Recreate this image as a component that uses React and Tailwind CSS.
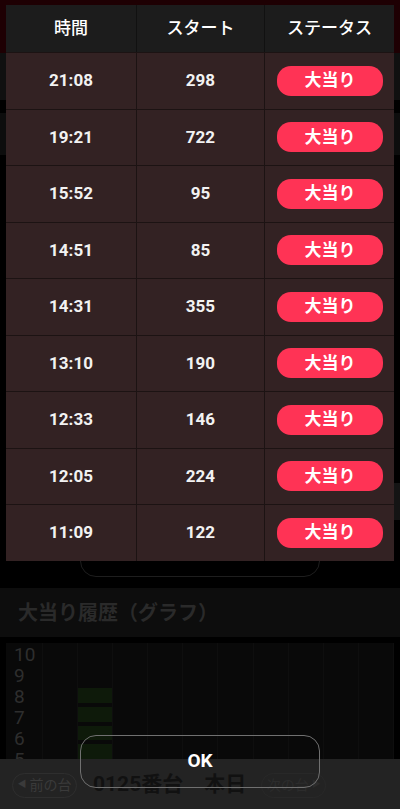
const rows = [
  ["21:08", "298"],
  ["19:21", "722"],
  ["15:52", "95"],
  ["14:51", "85"],
  ["14:31", "355"],
  ["13:10", "190"],
  ["12:33", "146"],
  ["12:05", "224"],
  ["11:09", "122"],
];

const labels = ["10", "9", "8", "7", "6", "5"];
const font = { fontFamily: '"Roboto", "Noto Sans CJK JP", sans-serif' };

const Graph = () => (
  <div className="mx-[6px] mt-[6px] h-[116px] bg-[#090909] flex">
    <div className="w-[37px] flex flex-col pl-[8px] pt-[1px] border-r border-[#0e0e0e]">
      {labels.map((l) => (
        <div key={l} className="h-[21px] leading-[21px] text-[19px] text-[#2e2e2e]">
          {l}
        </div>
      ))}
    </div>
    {Array.from({ length: 10 }).map((_, c) => (
      <div key={c} className="flex-1 border-r border-[#0e0e0e] flex flex-col pt-[45px] gap-[4px]">
        {c === 1 &&
          [0, 1, 2, 3].map((i) => (
            <div key={i} className="h-[17px] bg-[#0e1a0a]" />
          ))}
      </div>
    ))}
  </div>
);

const Background = () => (
  <div className="flex flex-col h-[809px] bg-black">
    <div className="h-[53px] bg-[#1e0003]" />
    <div className="h-[47px] bg-[#101010]" />
    <div className="h-[13px]" />
    <div className="h-[42px] bg-[#0d0d0d]" />
    <div className="h-[339px] flex justify-end">
      <div className="mt-[328px] w-[6px] h-[37px] bg-[#141414]" />
    </div>
    <div className="h-[94px] flex justify-center items-end pb-[11px]">
      <div className="w-[240px] h-[60px] rounded-[16px] border border-[#1e1e1e]" />
    </div>
    <div className="h-[49px] bg-[#0d0d0d] flex items-center pl-[18px]">
      <span className="text-[20px] font-bold text-[#2a2a2a]">大当り履歴（グラフ）</span>
    </div>
    <Graph />
    <div className="flex-1 bg-[#232323] flex items-center px-[12px] pt-[2px]">
      <div className="w-[65px] h-[25px] rounded-full border border-[#2e2e2e] flex items-center justify-center gap-[3px] text-[14px] text-[#3a3a3a]">
        <span className="text-[9px]">◀</span>前の台
      </div>
      <div className="ml-[16px] text-[21px] font-bold text-[#111]">0125番台　本日</div>
      <div className="ml-[15px] w-[65px] h-[25px] rounded-full border border-[#282828] flex items-center justify-center gap-[3px] text-[14px] text-[#2c2c2c]">
        次の台<span className="text-[9px]">▶</span>
      </div>
    </div>
  </div>
);

export default function App() {
  return (
    <div className="relative w-[400px] h-[809px] overflow-hidden" style={font}>
      <Background />
      <div className="absolute inset-0 flex flex-col">
        <div className="mt-[5px] mx-[6px]">
          <div className="grid grid-cols-[131px_128px_129px] h-[47px] bg-[#1c1c1c] text-white text-[17px] font-medium">
            <div className="flex items-center justify-center border-r border-[#111]">時間</div>
            <div className="flex items-center justify-center border-r border-[#111]">スタート</div>
            <div className="flex items-center justify-center">ステータス</div>
          </div>
          {rows.map(([t, s]) => (
            <div
              key={t}
              className="grid grid-cols-[131px_128px_129px] h-[56.5px] bg-[#332223] border-t border-[#1c1313] text-[#f2f2f2] text-[17px] font-bold"
            >
              <div className="flex items-center justify-center border-r border-[#1c1313]">{t}</div>
              <div className="flex items-center justify-center border-r border-[#1c1313]">{s}</div>
              <div className="flex items-center justify-center pl-[1px]">
                <div className="w-[106px] h-[30px] rounded-[14px] bg-[#ff3355] flex items-center justify-center text-white text-[17px] font-bold">
                  大当り
                </div>
              </div>
            </div>
          ))}
        </div>
        <div className="mt-[174px] mx-auto w-[240px] h-[53px] rounded-[16px] border border-[#707070] flex items-center justify-center text-white text-[19px] font-bold">
          OK
        </div>
      </div>
    </div>
  );
}
